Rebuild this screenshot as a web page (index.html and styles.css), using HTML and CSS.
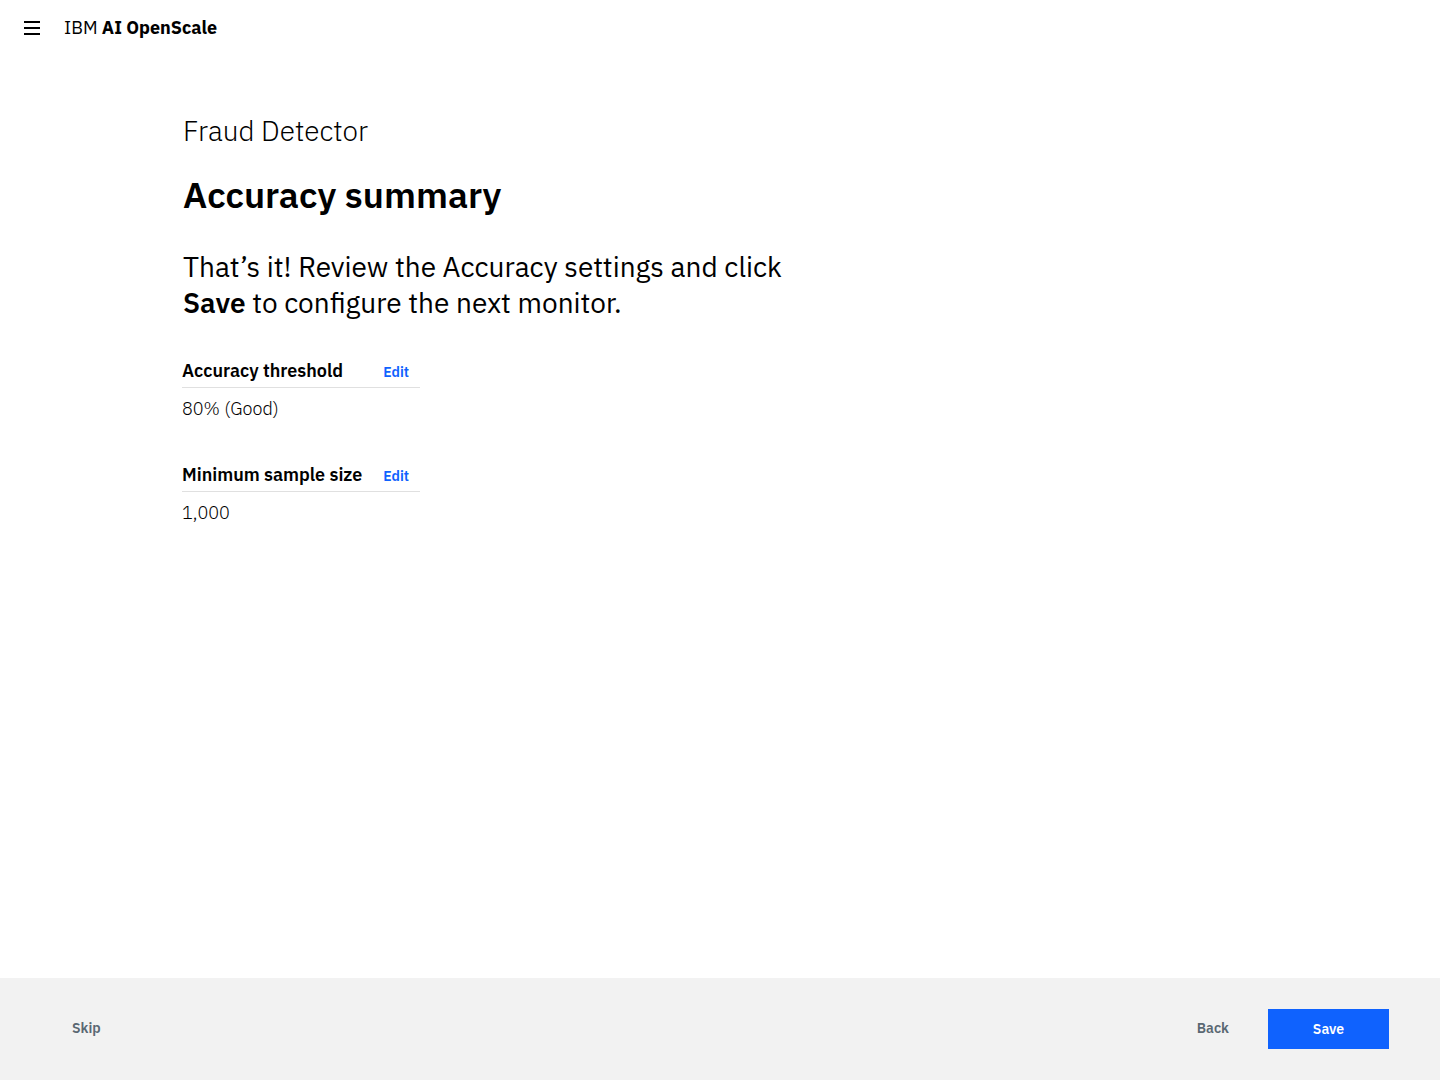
FILE: index.html
```html
<!DOCTYPE html>
<html lang="en">
<head>
<meta charset="utf-8">
<title>IBM AI OpenScale</title>
<link rel="stylesheet" href="styles.css">
</head>
<body>
<div class="app">
  <header class="topbar">
    <button class="menu-btn" aria-label="Menu">
      <svg width="16" height="14" viewBox="0 0 16 14"><rect x="0" y="0" width="16" height="2" fill="#000"/><rect x="0" y="6" width="16" height="2" fill="#000"/><rect x="0" y="12" width="16" height="2" fill="#000"/></svg>
    </button>
    <div class="brand">IBM <b>AI OpenScale</b></div>
  </header>
  <main class="content">
    <div class="subtitle">Fraud Detector</div>
    <h1 class="title">Accuracy summary</h1>
    <p class="lead">That’s it! Review the Accuracy settings and click<br><b>Save</b> to configure the next monitor.</p>
    <section class="setting">
      <div class="setting-head"><span class="setting-label">Accuracy threshold</span><a class="edit" href="#">Edit</a></div>
      <div class="setting-value">80% (Good)</div>
    </section>
    <section class="setting">
      <div class="setting-head"><span class="setting-label">Minimum sample size</span><a class="edit" href="#">Edit</a></div>
      <div class="setting-value">1,000</div>
    </section>
  </main>
  <footer class="footer">
    <a class="ghost" href="#">Skip</a>
    <div class="footer-right">
      <a class="ghost" href="#">Back</a>
      <button class="primary">Save</button>
    </div>
  </footer>
</div>
</body>
</html>
```
FILE: styles.css
```css
* { box-sizing: border-box; }
html, body { margin: 0; padding: 0; height: 100%; }
body {
  font-family: "IBM Plex Sans", "Noto Sans", "Open Sans", sans-serif;
  color: #000;
  background: #fff;
}
.app { display: flex; flex-direction: column; height: 1080px; }
.topbar { height: 56px; display: flex; align-items: center; padding-left: 24px; }
.menu-btn { width: 16px; height: 14px; padding: 0; border: 0; background: none; display: flex; margin-right: 24px; margin-top: -1px; }
.brand { font-size: 18px; color: #000; margin-top: -2px; }
.brand b { font-weight: 700; }
.content { flex: 1; padding-left: 182px; padding-top: 57px; }
.subtitle { font-size: 28px; font-weight: 300; line-height: 36px; margin-left: 1px; }
.title { font-size: 36px; font-weight: 600; line-height: 44px; margin: 24px 0 0 1px; }
.lead { font-size: 28px; font-weight: 400; line-height: 36px; margin: 32px 0 0 1px; }
.lead b { font-weight: 600; }
.setting { width: 238px; margin-top: 38px; }
.setting + .setting { margin-top: 43px; }
.setting-head { display: flex; align-items: baseline; justify-content: space-between; border-bottom: 1px solid #e0e0e0; padding: 0 11px 5px 0; }
.setting-label { font-size: 18px; font-weight: 600; }
.edit { font-size: 14px; font-weight: 600; color: #0f62fe; text-decoration: none; }
.setting-value { font-size: 18px; font-weight: 300; padding-top: 9px; }
.footer { height: 102px; background: #f2f2f2; display: flex; align-items: center; justify-content: space-between; padding: 0 51px 2px 72px; }
.ghost { font-size: 14px; font-weight: 600; color: #5a6872; text-decoration: none; }
.footer-right { display: flex; align-items: center; gap: 39px; }
.primary { width: 121px; height: 40px; border: 0; background: #0f62fe; color: #fff; font-family: inherit; font-size: 14px; font-weight: 600; margin-top: 2px; padding-bottom: 2px; }
```
